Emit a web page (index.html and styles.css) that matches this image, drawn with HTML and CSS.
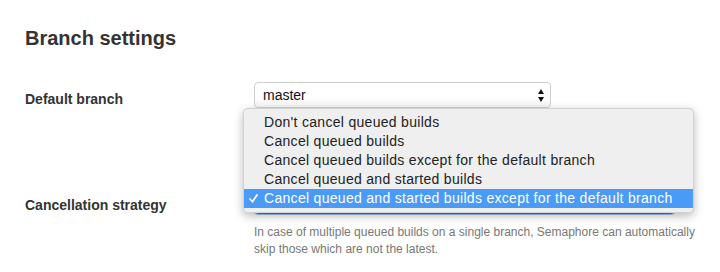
FILE: index.html
```html
<!DOCTYPE html>
<html lang="en">
<head>
<meta charset="utf-8">
<title>Branch settings</title>
<link rel="stylesheet" href="styles.css">
</head>
<body>
<main class="page">
  <h2 class="title">Branch settings</h2>
  <div class="field field-branch">
    <label class="label">Default branch</label>
    <div class="control">
      <div class="select select-branch">
        <span class="select-value">master</span>
        <svg class="select-arrows" width="6" height="13" viewBox="0 0 6 13" aria-hidden="true">
          <path d="M3 0 L6 5 L0 5 Z" fill="#111"/>
          <path d="M0 8 L6 8 L3 13 Z" fill="#111"/>
        </svg>
      </div>
    </div>
  </div>
  <div class="field field-cancel">
    <label class="label">Cancellation strategy</label>
    <div class="control">
      <div class="select select-cancel" aria-label="Cancel queued and started builds except for the default branch"></div>
      <p class="help">In case of multiple queued builds on a single branch, Semaphore can automatically skip those which are not the latest.</p>
    </div>
  </div>
</main>
<ul class="menu">
  <li class="menu-item">Don't cancel queued builds</li>
  <li class="menu-item">Cancel queued builds</li>
  <li class="menu-item">Cancel queued builds except for the default branch</li>
  <li class="menu-item">Cancel queued and started builds</li>
  <li class="menu-item is-selected"><svg class="check" width="9" height="9" viewBox="0 0 9 9" aria-hidden="true"><path d="M1 5 L3.5 7.8 L8 1" fill="none" stroke="#fff" stroke-width="1.7" stroke-linecap="round" stroke-linejoin="round"/></svg>Cancel queued and started builds except for the default branch</li>
</ul>
</body>
</html>
```
FILE: styles.css
```css
* { box-sizing: border-box; }
html, body { margin: 0; padding: 0; background: #fff; }
body {
  position: relative;
  width: 720px;
  height: 272px;
  overflow: hidden;
  font-family: "Liberation Sans", Arial, sans-serif;
  color: #333;
}
.page {
  padding: 26px 25px 0 25px;
}
.title {
  margin: 0;
  font-size: 20px;
  line-height: 24px;
  font-weight: bold;
  color: #333;
}
.field {
  display: grid;
  grid-template-columns: 229px 1fr;
  align-items: start;
}
.field-branch { margin-top: 32px; }
.field-cancel { margin-top: 76px; }
.label {
  font-size: 14px;
  font-weight: bold;
  line-height: 26px;
  padding-top: 4px;
  color: #333;
}
.select {
  position: relative;
  height: 26px;
  border: 1px solid #cfcfcf;
  border-radius: 4px;
  background: linear-gradient(#fff 0%, #fff 50%, #f5f5f5 100%);
  font-size: 14px;
  line-height: 24px;
  padding-left: 8px;
  color: #111;
  display: flex;
  align-items: center;
}
.select-branch { width: 297px; }
.select-cancel {
  width: 421px;
  border-color: #3f7fcf;
  box-shadow: 0 0 0 1px #9cc4ef;
}
.select-value { flex: 1; white-space: nowrap; overflow: hidden; }
.select-arrows { margin-right: 6px; margin-top: 1px; }
.help {
  margin: 10px 0 0 0;
  width: 455px;
  font-size: 12px;
  line-height: 17px;
  color: #777;
}
.menu {
  position: absolute;
  left: 243px;
  top: 108px;
  width: 451px;
  margin: 0;
  padding: 4px 0;
  list-style: none;
  background: #efefef;
  border: 1px solid rgba(0,0,0,0.12);
  border-radius: 5px;
  box-shadow: 0 3px 10px rgba(0,0,0,0.28);
}
.menu-item {
  position: relative;
  height: 19px;
  line-height: 19px;
  padding-left: 20px;
  font-size: 14px;
  letter-spacing: 0.3px;
  color: #222;
  white-space: nowrap;
}
.menu-item.is-selected {
  background: #4a9af8;
  color: #fff;
}
.check {
  position: absolute;
  left: 5px;
  top: 5px;
}
```
